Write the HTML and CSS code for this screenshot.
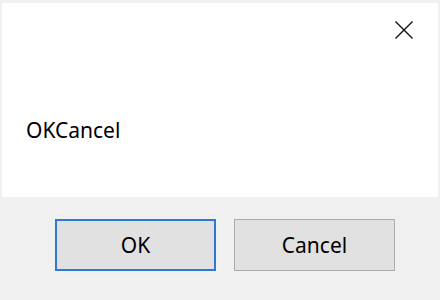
FILE: index.html
```html
<!DOCTYPE html>
<html>
<head>
<meta charset="utf-8">
<link rel="stylesheet" href="styles.css">
</head>
<body>
<div class="dialog">
  <div class="content">
    <div class="titlebar">
      <button class="close" aria-label="Close">
        <svg width="20" height="20" viewBox="0 0 20 20"><path d="M1.5 1.5 L18.5 18.5 M18.5 1.5 L1.5 18.5" stroke="#111" stroke-width="1.4" fill="none"/></svg>
      </button>
    </div>
    <p class="message">OKCancel</p>
  </div>
  <div class="footer">
    <button class="btn btn-primary">OK</button>
    <button class="btn">Cancel</button>
  </div>
</div>
</body>
</html>
```
FILE: styles.css
```css
html, body {
  margin: 0;
  padding: 0;
  width: 440px;
  height: 300px;
  background: #f0f0f0;
  font-family: "Noto Sans", "Open Sans", sans-serif;
  overflow: hidden;
}
.dialog {
  display: flex;
  flex-direction: column;
  height: 300px;
  padding-top: 3px;
  box-sizing: border-box;
}
.content {
  background: #fff;
  margin: 0 2px;
  height: 194px;
  display: flex;
  flex-direction: column;
}
.titlebar {
  display: flex;
  justify-content: flex-end;
  padding: 17px 24px 0 0;
}
.close {
  border: 0;
  background: none;
  padding: 0;
  width: 20px;
  height: 20px;
  display: block;
}
.close svg { display: block; }
.message {
  margin: 0;
  padding: 0 0 0 24px;
  margin-top: 76px;
  font-size: 21px;
  line-height: 28px;
  color: #000;
}
.footer {
  flex: 1;
  display: flex;
  justify-content: flex-end;
  align-items: flex-start;
  gap: 18px;
  padding: 22px 45px 0 0;
}
.btn {
  box-sizing: border-box;
  width: 161px;
  height: 52px;
  background: #e1e1e1;
  border: 1px solid #adadad;
  font-family: inherit;
  font-size: 21px;
  color: #000;
  padding: 0;
}
.btn-primary {
  border: 2px solid #2b7ad4;
}
```
